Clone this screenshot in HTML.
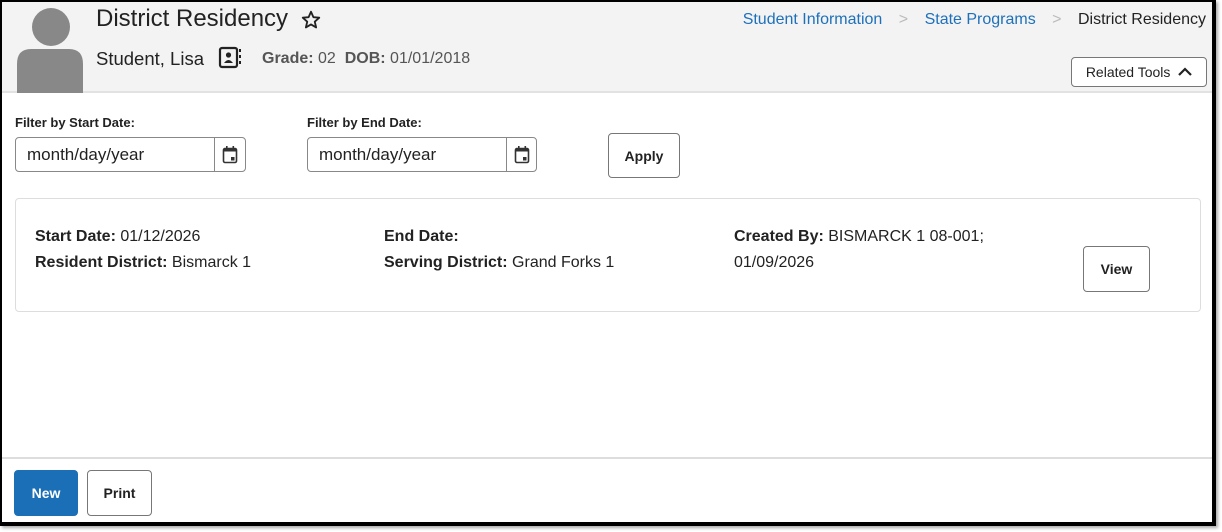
<!DOCTYPE html>
<html><head><meta charset="utf-8"><style>
*{box-sizing:border-box;margin:0;padding:0}
body{width:1222px;height:532px;background:#fff;position:relative;overflow:hidden;font-family:"Liberation Sans",sans-serif;color:#222}
.a{position:absolute;white-space:nowrap}
.frame{position:absolute;left:0;top:0;width:1216px;height:526px;border:2px solid #000;border-right-width:4px;border-bottom-width:4px;box-shadow:2px 2px 3px #aaa}
.hdr{position:absolute;left:2px;top:2px;width:1210px;height:91px;background:#f3f3f3;border-bottom:2px solid #e2e2e2}
.btn{position:absolute;border:1px solid #777;border-radius:4px;background:#fff;font-weight:bold;font-size:14px;display:flex;align-items:center;justify-content:center;color:#222}
.inp{position:absolute;border:1px solid #888;border-radius:4px;height:35px;width:231px;background:#fff}
.inp span{position:absolute;left:11px;top:7px;font-size:17px}
.inp i{position:absolute;left:198px;top:0;width:1px;height:33px;background:#888}
.lbl{font-size:13px;font-weight:bold}
.t{font-size:16px}
b{font-weight:bold}
</style></head><body>
<div class="hdr"></div>
<div class="frame"></div>
<svg class="a" style="left:17px;top:8px" width="67" height="85"><circle cx="34" cy="19" r="19" fill="#888"/><path d="M0 56 Q0 41 14 41 H52 Q66 41 66 56 V85 H0Z" fill="#888"/></svg>
<div class="a" style="left:96px;top:5px;font-size:24px;color:#222">District Residency</div>
<svg class="a" style="left:300px;top:9px" width="22" height="22" viewBox="0 0 24 24"><path d="M12 3l2.6 5.9 6.4.6-4.9 4.3 1.5 6.3L12 16.8 6.4 20.1l1.5-6.3L3 9.5l6.4-.6z" fill="none" stroke="#222" stroke-width="2" stroke-linejoin="round"/></svg>
<div class="a" style="left:96px;top:48px;font-size:18.5px">Student, Lisa</div>
<svg class="a" style="left:218px;top:46px" width="24" height="24"><rect x="2" y="2" width="17" height="19" rx="2" fill="none" stroke="#222" stroke-width="2.2"/><circle cx="10.5" cy="9" r="2.6" fill="#222"/><path d="M6 17 Q10.5 11 15 17Z" fill="#222"/><rect x="21" y="3" width="2" height="3" fill="#222"/><rect x="21" y="9" width="2" height="3" fill="#222"/><rect x="21" y="15" width="2" height="3" fill="#222"/></svg>
<div class="a" style="left:262px;top:50px;font-size:16px;color:#555"><b>Grade:</b> 02&nbsp;&nbsp;<b>DOB:</b> 01/01/2018</div>
<div class="a" style="right:16px;top:11px;font-size:16px;color:#1e70bb">Student Information <span style="color:#bbb;margin:0 12px">&gt;</span> State Programs <span style="color:#bbb;margin:0 12px">&gt;</span> <span style="color:#222">District Residency</span></div>
<div class="btn" style="left:1071px;top:57px;width:136px;height:30px;font-weight:normal;font-size:14px">Related Tools&nbsp;&nbsp;<svg width="14" height="10"><path d="M1 8 L7 2 L13 8" fill="none" stroke="#222" stroke-width="2.2"/></svg></div>
<div class="a lbl" style="left:15px;top:115px">Filter by Start Date:</div>
<div class="a lbl" style="left:307px;top:115px">Filter by End Date:</div>
<div class="inp" style="left:15px;top:137px"><span>month/day/year</span><i></i><svg class="a" style="left:206px;top:8px" width="16" height="18"><rect x="1.5" y="2.5" width="13" height="14" rx="1.5" fill="none" stroke="#333" stroke-width="1.6"/><rect x="1.5" y="2.5" width="13" height="3" fill="#333"/><rect x="9" y="11" width="3.5" height="3.5" fill="#333"/><rect x="4" y="0" width="1.6" height="3" fill="#333"/><rect x="10.5" y="0" width="1.6" height="3" fill="#333"/></svg></div>
<div class="inp" style="left:307px;top:137px;width:230px"><span>month/day/year</span><i></i><svg class="a" style="left:206px;top:8px" width="16" height="18"><rect x="1.5" y="2.5" width="13" height="14" rx="1.5" fill="none" stroke="#333" stroke-width="1.6"/><rect x="1.5" y="2.5" width="13" height="3" fill="#333"/><rect x="9" y="11" width="3.5" height="3.5" fill="#333"/><rect x="4" y="0" width="1.6" height="3" fill="#333"/><rect x="10.5" y="0" width="1.6" height="3" fill="#333"/></svg></div>
<div class="btn" style="left:608px;top:133px;width:72px;height:45px">Apply</div>
<div class="a" style="left:15px;top:198px;width:1186px;height:114px;border:1px solid #ddd;border-radius:4px"></div>
<div class="a t" style="left:35px;top:228px"><b>Start Date:</b> 01/12/2026</div>
<div class="a t" style="left:35px;top:254px"><b>Resident District:</b> Bismarck 1</div>
<div class="a t" style="left:384px;top:228px"><b>End Date:</b></div>
<div class="a t" style="left:384px;top:254px"><b>Serving District:</b> Grand Forks 1</div>
<div class="a t" style="left:734px;top:228px"><b>Created By:</b> BISMARCK 1 08-001;</div>
<div class="a t" style="left:734px;top:254px">01/09/2026</div>
<div class="btn" style="left:1083px;top:246px;width:67px;height:46px">View</div>
<div class="a" style="left:2px;top:457px;width:1210px;height:2px;background:#ddd"></div>
<div class="btn" style="left:14px;top:470px;width:64px;height:46px;background:#1b6fb7;border-color:#1b6fb7;color:#fff">New</div>
<div class="btn" style="left:87px;top:470px;width:65px;height:46px">Print</div>
</body></html>
